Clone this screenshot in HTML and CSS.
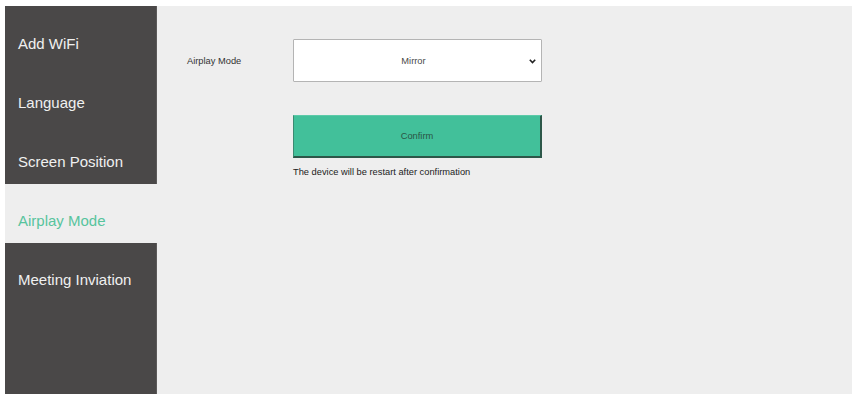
FILE: index.html
```html
<!DOCTYPE html>
<html lang="en">
<head>
<meta charset="utf-8">
<title>Airplay Mode</title>
<link rel="stylesheet" href="styles.css">
</head>
<body>
<div class="panel">
  <nav class="sidebar">
    <div class="item">Add WiFi</div>
    <div class="item">Language</div>
    <div class="item">Screen Position</div>
    <div class="item active">Airplay Mode</div>
    <div class="item">Meeting Inviation</div>
    <div class="fill"></div>
  </nav>
  <main class="content">
    <div class="row">
      <div class="label">Airplay Mode</div>
      <div class="select">
        <span class="select-value">Mirror</span>
        <svg class="chev" width="7" height="5" viewBox="0 0 7 5"><path d="M0.8 0.8 L3.5 3.6 L6.2 0.8" fill="none" stroke="#222" stroke-width="1.6"/></svg>
      </div>
    </div>
    <div class="actions">
      <div class="confirm">Confirm</div>
      <div class="note">The device will be restart after confirmation</div>
    </div>
  </main>
</div>
</body>
</html>
```

FILE: styles.css
```css
html, body {
  margin: 0;
  padding: 0;
  background: #ffffff;
}
body {
  font-family: "Liberation Sans", Arial, sans-serif;
  padding: 6px 3px 14px 5px;
  height: 408px;
  box-sizing: border-box;
}
.panel {
  display: flex;
  width: 847px;
  height: 388px;
  background: #eeeeee;
}
.sidebar {
  width: 152px;
  display: flex;
  flex-direction: column;
  padding-top: 1px;
  background: #4a4848;
  box-sizing: border-box;
  border-right: 1px solid #5c5a5a;
}
.sidebar .item {
  height: 59px;
  box-sizing: border-box;
  padding: 28px 0 0 13px;
  font-size: 15px;
  line-height: 17px;
  color: #f0f0f0;
  white-space: nowrap;
}
.sidebar .item.active {
  background: #eeeeee;
  color: #57c49d;
  margin-right: -1px;
}
.sidebar .fill {
  flex: 1;
}
.content {
  flex: 1;
  padding: 33px 0 0 30px;
}
.row {
  display: flex;
  align-items: center;
}
.label {
  width: 106px;
  font-size: 9.3px;
  color: #333333;
  padding-top: 1px;
}
.select {
  width: 249px;
  height: 43px;
  box-sizing: border-box;
  background: #ffffff;
  border: 1px solid #b4b4b4;
  border-radius: 1px;
  display: grid;
  grid-template-columns: 1fr auto;
  align-items: center;
  padding: 0 5px 0 0;
}
.select-value {
  text-align: center;
  font-size: 9.3px;
  color: #4a4a4a;
  padding-left: 4px;
}
.chev {
  display: block;
  margin-top: 1px;
}
.actions {
  margin-left: 106px;
  margin-top: 33px;
}
.confirm {
  width: 249px;
  height: 43px;
  box-sizing: border-box;
  background: #42c09a;
  border: 1px solid;
  border-color: #5ccaa8 #2d5749 #2d5749 #3c8a72;
  border-width: 1px 2px 2px 1px;
  display: flex;
  align-items: center;
  justify-content: center;
  font-size: 9.3px;
  color: #2a5545;
}
.note {
  margin-top: 9px;
  font-size: 9.3px;
  color: #222222;
}
```
